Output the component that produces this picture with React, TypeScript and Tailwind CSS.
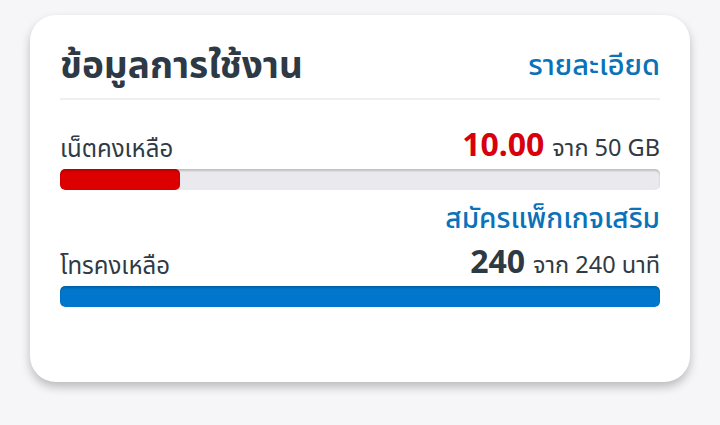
import React from 'react'

const font = { fontFamily: '"Noto Sans", "Noto Sans Thai", Roboto, sans-serif' }

function Bar({ percent, color }: { percent: number; color: string }) {
  return (
    <div className="h-[21px] w-full overflow-hidden rounded-[5px] bg-[#e9e9ee] shadow-[inset_0_2px_2px_rgba(0,0,0,0.18)]">
      <div
        className={`h-full rounded-[5px] shadow-[inset_0_2px_2px_rgba(0,0,0,0.18)] ${color}`}
        style={{ width: `${percent}%` }}
      ></div>
    </div>
  )
}

export default function App() {
  return (
    <div className="min-h-[425px] w-[720px] bg-[#f6f6f8] pt-[15px] pl-[30px]" style={font}>
      <div className="flex h-[367px] w-[660px] flex-col rounded-[26px] bg-white px-[30px] pt-[27px] shadow-[0_5px_10px_rgba(0,0,0,0.24)]">
        <header className="flex items-center justify-between border-b-2 border-[#efeff1] pb-[12px]">
          <h1 className="text-[37px] font-bold leading-[44px] text-[#2d3945]">ข้อมูลการใช้งาน</h1>
          <a className="text-[29px] font-medium leading-[44px] text-[#0a72b9]">รายละเอียด</a>
        </header>

        <div className="mt-[28px] flex items-end justify-between leading-none">
          <span className="text-[24px] text-[#2f3a44]">เน็ตคงเหลือ</span>
          <span className="text-[23.5px] text-[#2f3a44]">
            <span className="mr-[8px] text-[32px] font-bold text-[#d8000c]">10.00</span>
            จาก 50 GB
          </span>
        </div>
        <div className="mt-[9px]">
          <Bar percent={20} color="bg-[#dc0000]" />
        </div>
        <div className="mt-[10px] text-right text-[28px] font-medium leading-[34px] text-[#0a72b9]">สมัครแพ็กเกจเสริม</div>

        <div className="mt-[11px] flex items-end justify-between leading-none">
          <span className="text-[24px] text-[#2f3a44]">โทรคงเหลือ</span>
          <span className="text-[23.5px] text-[#2f3a44]">
            <span className="mr-[8px] text-[32px] font-bold text-[#2d3945]">240</span>
            จาก 240 นาที
          </span>
        </div>
        <div className="mt-[9px]">
          <Bar percent={100} color="bg-[#0077cc]" />
        </div>
      </div>
    </div>
  )
}
